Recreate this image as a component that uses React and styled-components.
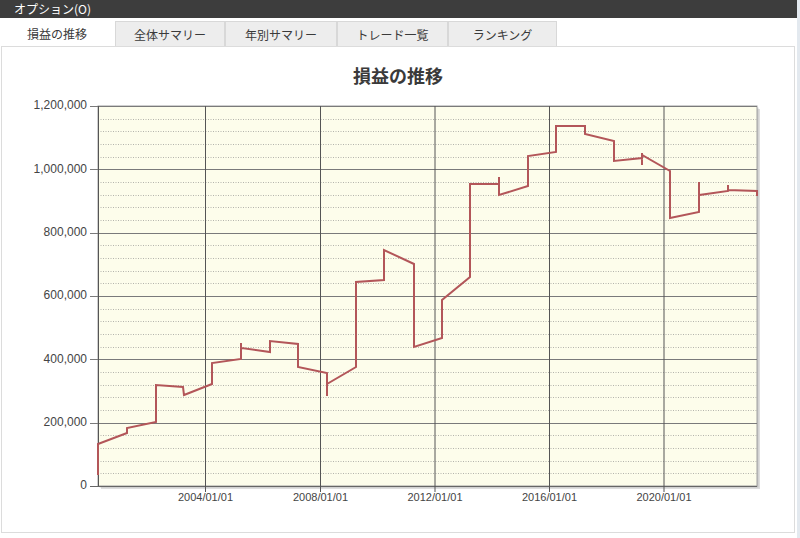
import React from 'react'
import styled, { createGlobalStyle } from 'styled-components'

const GlobalStyle = createGlobalStyle`
  html, body {
    margin: 0;
    padding: 0;
    background: #fff;
  }
  body {
    font-family: "Liberation Sans", "Noto Sans CJK JP", sans-serif;
  }
`

const Frame = styled.div`
  width: 797px;
  height: 538px;
  border-right: 3px solid #e3e9ef;
  display: flex;
  flex-direction: column;
  background: #fff;
`

const MenuBar = styled.div`
  height: 18px;
  background: #3d3d3d;
  color: #fff;
  font-size: 12px;
  font-family: "Noto Sans CJK JP", sans-serif;
  line-height: 18px;
  padding-left: 14px;
`

const TabRow = styled.div`
  display: flex;
  height: 26px;
  margin-top: 2px;
`

const Tab = styled.div`
  width: ${p => p.$w}px;
  box-sizing: border-box;
  display: flex;
  align-items: center;
  justify-content: center;
  font-size: 12px;
  font-family: "Noto Sans CJK JP", sans-serif;
  color: #3a3a3a;
  background: ${p => (p.$active ? '#fff' : '#ededed')};
  border: 1px solid ${p => (p.$active ? 'transparent' : '#d8d8d8')};
  border-left: ${p => (p.$active ? 'none' : '1px solid #d8d8d8')};
  border-bottom: none;
  margin-top: ${p => (p.$active ? '0' : '1px')};
`

const Panel = styled.div`
  margin-left: 1px;
  width: 794px;
  height: 487px;
  box-sizing: border-box;
  border: 1px solid #dcdcdc;
  display: flex;
  flex-direction: column;
`

const Title = styled.h1`
  margin: 0;
  height: 45px;
  box-sizing: border-box;
  padding-top: 15px;
  text-align: center;
  font-size: 18px;
  line-height: 26px;
  font-weight: bold;
  color: #3a3a3a;
  font-family: "Noto Sans CJK JP", sans-serif;
`

const ChartSvg = styled.svg`
  display: block;
  font-family: "Liberation Sans", sans-serif;
`

const tabs = [
  { label: '損益の推移', w: 115 },
  { label: '全体サマリー', w: 110 },
  { label: '年別サマリー', w: 112 },
  { label: 'トレード一覧', w: 111 },
  { label: 'ランキング', w: 109 },
]

const X0 = 98
const X1 = 757
const Y0 = 106
const Y1 = 486
const yOf = v => Y1 - (v / 1200000) * (Y1 - Y0)

const yearTicks = [
  { x: 205.5, label: '2004/01/01' },
  { x: 320.5, label: '2008/01/01' },
  { x: 435, label: '2012/01/01' },
  { x: 549.5, label: '2016/01/01' },
  { x: 664, label: '2020/01/01' },
]

const pts = [
  [98, 475], [98, 444], [127, 433], [127, 428], [156, 422], [156, 385],
  [183, 387], [184, 395], [212, 384], [212, 363], [241, 359], [241, 343],
  [241, 348], [270, 352], [270, 341], [298, 344], [298, 367], [327, 373],
  [327, 396], [327, 384], [356, 367], [356, 282], [384, 280], [384, 250],
  [414, 264], [414, 347], [442, 338], [442, 300], [470, 277], [470, 184],
  [499, 184], [499, 177], [499, 195], [528, 186], [528, 156], [556, 152],
  [556, 126], [585, 126], [585, 134], [614, 141], [614, 161], [642, 158],
  [642, 153], [642, 165], [642, 155], [670, 171], [670, 218], [699, 212],
  [699, 182], [699, 195], [728, 191], [728, 185], [728, 190], [757, 191],
  [757, 196],
]

function Chart() {
  const majors = [0, 200000, 400000, 600000, 800000, 1000000, 1200000]
  const minors = []
  for (let v = 40000; v < 1200000; v += 40000) {
    if (v % 200000 !== 0) minors.push(v)
  }

  return (
    <ChartSvg width="792" height="440" viewBox="2 92 792 440">
      {/* shadow */}
      <rect x={X0 + 3} y={Y0 + 3} width={X1 - X0} height={Y1 - Y0} fill="#c8c8c8" opacity="0.6" />
      <rect x={X0 + 1.5} y={Y0 + 1.5} width={X1 - X0} height={Y1 - Y0} fill="#b0b0b0" opacity="0.5" />
      <rect x={X0} y={Y0} width={X1 - X0} height={Y1 - Y0} fill="#fdfdeb" stroke="#a0a0a0" strokeWidth="1" />

      {minors.map(v => (
        <line key={v} x1={X0} x2={X1} y1={Math.round(yOf(v)) + 0.5} y2={Math.round(yOf(v)) + 0.5}
          stroke="#b4b4ac" strokeWidth="1" strokeDasharray="1 1.5" />
      ))}
      {majors.map(v => (
        <g key={v}>
          <line x1={90} x2={X1} y1={Math.round(yOf(v)) + 0.5} y2={Math.round(yOf(v)) + 0.5}
            stroke={v === 0 ? '#666' : '#7a7a7a'} strokeWidth="1" />
          <text x={87} y={yOf(v)} textAnchor="end" dominantBaseline="middle" fontSize="12" fill="#444">
            {v.toLocaleString('en-US')}
          </text>
        </g>
      ))}
      {yearTicks.map(t => (
        <g key={t.label}>
          <line x1={t.x} x2={t.x} y1={Y0} y2={Y1 + 6} stroke="#555" strokeWidth="1" />
          <text x={t.x} y={Y1 + 12} textAnchor="middle" dominantBaseline="middle" fontSize="11" fill="#444">
            {t.label}
          </text>
        </g>
      ))}
      <line x1={X0 + 0.5} x2={X0 + 0.5} y1={Y0} y2={Y1} stroke="#555" strokeWidth="1" />

      <polyline points={pts.map(p => p.join(',')).join(' ')} fill="none" stroke="#b35659"
        strokeWidth="2" strokeLinejoin="miter" />
    </ChartSvg>
  )
}

export default function App() {
  return (
    <>
      <GlobalStyle />
      <Frame>
        <MenuBar>オプション(O)</MenuBar>
        <TabRow>
          {tabs.map((t, i) => (
            <Tab key={t.label} $w={t.w} $active={i === 0}>{t.label}</Tab>
          ))}
        </TabRow>
        <Panel>
          <Title>損益の推移</Title>
          <Chart />
        </Panel>
      </Frame>
    </>
  )
}
